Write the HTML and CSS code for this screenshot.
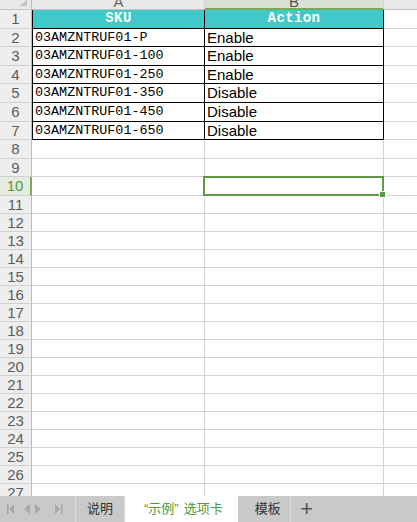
FILE: index.html
```html
<!DOCTYPE html>
<html lang="zh-CN">
<head>
    <meta charset="UTF-8">
    <meta name="viewport" content="width=device-width, initial-scale=1.0">
    <title>示例</title>
    <link rel="stylesheet" href="styles.css">
</head>
<body>
    <div class="sheet">
        <div class="row col-head">
            <div class="rh corner"><span class="tri"></span></div>
            <div class="cell a"><span>A</span></div>
            <div class="cell b sel-col"><span>B</span></div>
            <div class="cell c"></div>
        </div>
        <div class="row tall">
            <div class="rh">1</div>
            <div class="cell a data th">SKU</div>
            <div class="cell b data th">Action</div>
            <div class="cell c"></div>
        </div>
        <div class="row tall">
            <div class="rh">2</div>
            <div class="cell a data sku">03AMZNTRUF01-P</div>
            <div class="cell b data">Enable</div>
            <div class="cell c"></div>
        </div>
        <div class="row tall">
            <div class="rh">3</div>
            <div class="cell a data sku">03AMZNTRUF01-100</div>
            <div class="cell b data">Enable</div>
            <div class="cell c"></div>
        </div>
        <div class="row tall">
            <div class="rh">4</div>
            <div class="cell a data sku">03AMZNTRUF01-250</div>
            <div class="cell b data">Enable</div>
            <div class="cell c"></div>
        </div>
        <div class="row tall">
            <div class="rh">5</div>
            <div class="cell a data sku">03AMZNTRUF01-350</div>
            <div class="cell b data">Disable</div>
            <div class="cell c"></div>
        </div>
        <div class="row tall">
            <div class="rh">6</div>
            <div class="cell a data sku">03AMZNTRUF01-450</div>
            <div class="cell b data">Disable</div>
            <div class="cell c"></div>
        </div>
        <div class="row tall">
            <div class="rh">7</div>
            <div class="cell a data sku">03AMZNTRUF01-650</div>
            <div class="cell b data">Disable</div>
            <div class="cell c"></div>
        </div>
        <div class="row tall"><div class="rh">8</div><div class="cell a"></div><div class="cell b"></div><div class="cell c"></div></div>
        <div class="row tall"><div class="rh">9</div><div class="cell a"></div><div class="cell b"></div><div class="cell c"></div></div>
        <div class="row tall">
            <div class="rh sel-row">10</div>
            <div class="cell a"></div>
            <div class="cell b active"><span class="selection"><span class="handle"></span></span></div>
            <div class="cell c"></div>
        </div>
        <div class="row"><div class="rh">11</div><div class="cell a"></div><div class="cell b"></div><div class="cell c"></div></div>
        <div class="row"><div class="rh">12</div><div class="cell a"></div><div class="cell b"></div><div class="cell c"></div></div>
        <div class="row"><div class="rh">13</div><div class="cell a"></div><div class="cell b"></div><div class="cell c"></div></div>
        <div class="row"><div class="rh">14</div><div class="cell a"></div><div class="cell b"></div><div class="cell c"></div></div>
        <div class="row"><div class="rh">15</div><div class="cell a"></div><div class="cell b"></div><div class="cell c"></div></div>
        <div class="row"><div class="rh">16</div><div class="cell a"></div><div class="cell b"></div><div class="cell c"></div></div>
        <div class="row"><div class="rh">17</div><div class="cell a"></div><div class="cell b"></div><div class="cell c"></div></div>
        <div class="row"><div class="rh">18</div><div class="cell a"></div><div class="cell b"></div><div class="cell c"></div></div>
        <div class="row"><div class="rh">19</div><div class="cell a"></div><div class="cell b"></div><div class="cell c"></div></div>
        <div class="row"><div class="rh">20</div><div class="cell a"></div><div class="cell b"></div><div class="cell c"></div></div>
        <div class="row"><div class="rh">21</div><div class="cell a"></div><div class="cell b"></div><div class="cell c"></div></div>
        <div class="row"><div class="rh">22</div><div class="cell a"></div><div class="cell b"></div><div class="cell c"></div></div>
        <div class="row"><div class="rh">23</div><div class="cell a"></div><div class="cell b"></div><div class="cell c"></div></div>
        <div class="row"><div class="rh">24</div><div class="cell a"></div><div class="cell b"></div><div class="cell c"></div></div>
        <div class="row"><div class="rh">25</div><div class="cell a"></div><div class="cell b"></div><div class="cell c"></div></div>
        <div class="row"><div class="rh">26</div><div class="cell a"></div><div class="cell b"></div><div class="cell c"></div></div>
        <div class="row"><div class="rh">27</div><div class="cell a"></div><div class="cell b"></div><div class="cell c"></div></div>
    </div>

    <div class="tabbar">
        <div class="nav">
            <svg width="70" height="26" viewBox="0 0 70 26">
                <g fill="#a8a8a8">
                    <rect x="7" y="8" width="1.5" height="10"/>
                    <polygon points="14,8 14,18 9,13"/>
                    <polygon points="30,8 30,18 24,13"/>
                    <polygon points="35,8 35,18 41,13"/>
                    <polygon points="55,8 55,18 60,13"/>
                    <rect x="61" y="8" width="1.5" height="10"/>
                </g>
            </svg>
        </div>
        <div class="tab">说明</div>
        <div class="tab current">“示例<span class="close-q">”</span>选项卡</div>
        <div class="tab last">模板</div>
        <div class="add">+</div>
    </div>
</body>
</html>
```

FILE: styles.css
```css
html, body {
    margin: 0;
    padding: 0;
}
body {
    width: 417px;
    height: 522px;
    overflow: hidden;
    background: #fff;
    font-family: "Liberation Sans", Arial, sans-serif;
}
.sheet {
    height: 496px;
    overflow: hidden;
}
.row {
    display: flex;
    height: 18px;
}
.row.tall {
    height: 18.6px;
}
.rh, .cell {
    box-sizing: border-box;
    border-bottom: 1px solid #d4d4d4;
    flex-shrink: 0;
    white-space: nowrap;
    overflow: hidden;
}
.rh {
    width: 32px;
    background: #eeeeee;
    border-right: 1px solid #bdbdbd;
    border-bottom-color: #d0d0d0;
    color: #5c5c5c;
    font-size: 15px;
    line-height: 18px;
    text-align: center;
}
.row:not(.tall) .rh {
    line-height: 17px;
}
.cell {
    border-right: 1px solid #d4d4d4;
    font-size: 15px;
    line-height: 17.6px;
    color: #000;
}
.cell.a {
    width: 173px;
    border-left: 1px solid transparent;
}
.cell.b {
    width: 179px;
}
.cell.c {
    flex: 1;
    border-right: none;
}
.col-head {
    height: 10px;
}
.col-head .rh,
.col-head .cell {
    background: #e9e9e9;
    border-bottom: 1px solid #c4c4c4;
    color: #666;
    text-align: center;
}
.col-head .cell span {
    display: block;
    font-size: 15px;
    line-height: 15px;
    margin-top: -6px;
}
.col-head .sel-col {
    background: #d9e2d2;
    border-bottom: 2px solid #79a95c;
    color: #555;
}
.corner {
    position: relative;
}
.tri {
    position: absolute;
    right: 4px;
    top: 0;
    width: 0;
    height: 0;
    border-left: 8px solid transparent;
    border-bottom: 6px solid #c4c4c4;
}
.data {
    border-right-color: #000;
    border-bottom-color: #000;
    padding-left: 2px;
}
.cell.a.data {
    border-left-color: #000;
}
.th {
    background: #40c9c9;
    color: #fff;
    font-family: "Liberation Mono", "DejaVu Sans Mono", monospace;
    font-weight: bold;
    font-size: 14px;
    letter-spacing: 0.4px;
    text-align: center;
    padding-left: 0;
}
.sku {
    font-family: "Liberation Mono", "DejaVu Sans Mono", monospace;
    font-size: 13.4px;
}
.sel-row {
    color: #4f9a36;
    background: #e6ebe1;
    border-right: 2px solid #79a95c;
}
.active {
    position: relative;
    overflow: visible;
}
.selection {
    position: absolute;
    top: -1px;
    bottom: -1px;
    left: -2px;
    right: -1px;
    border: 2px solid #5f9a43;
}
.handle {
    position: absolute;
    right: -4px;
    bottom: -4px;
    width: 5px;
    height: 5px;
    background: #5f9a43;
    border: 1px solid #fff;
}
.tabbar {
    display: flex;
    height: 26px;
    background: #c9c9c9;
    font-family: "Liberation Sans", "Noto Sans CJK SC", sans-serif;
    font-size: 13px;
    color: #333;
}
.nav {
    width: 75px;
    border-right: 1px solid #d8d8d8;
}
.nav svg {
    display: block;
}
.tab {
    padding: 0 11px;
    line-height: 26px;
    border-right: 1px solid #d8d8d8;
}
.tab.current {
    background: #fff;
    color: #4f9a36;
    padding: 0 15px 0 19px;
    border-right: none;
}
.close-q {
    margin-right: 5px;
}
.tab.last {
    padding: 0 9px 0 17px;
}
.add {
    width: 32px;
    text-align: center;
    font-size: 22px;
    line-height: 25px;
    color: #555;
}
```
